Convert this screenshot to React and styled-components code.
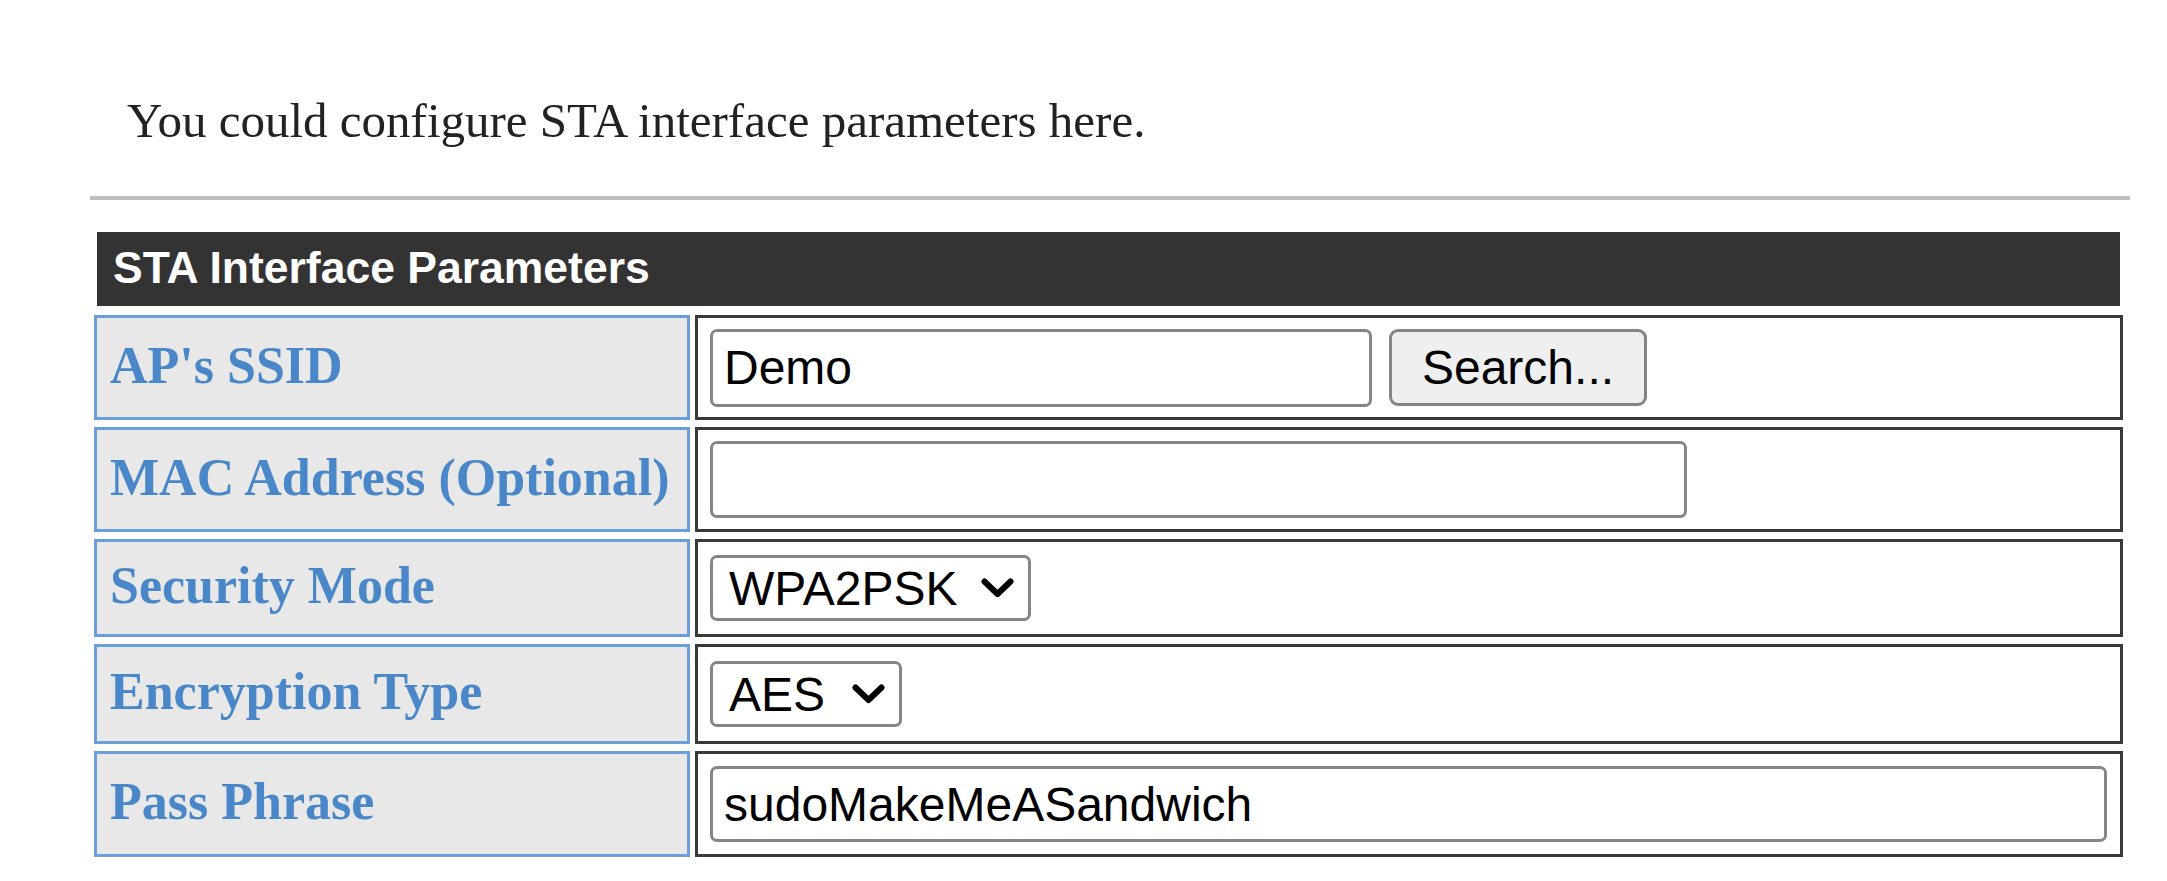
import React from "react";
import styled, { createGlobalStyle } from "styled-components";

const GlobalStyle = createGlobalStyle`
  html, body {
    margin: 0;
    padding: 0;
    background: #fff;
  }
  body {
    font-family: "Liberation Serif", "Times New Roman", serif;
  }
`;

const Page = styled.main`
  box-sizing: border-box;
  width: 2167px;
  padding: 92px 37px 0 90px;
`;

const Intro = styled.p`
  margin: 0 0 0 37px;
  font-family: "Liberation Serif", "Times New Roman", serif;
  font-size: 49px;
  line-height: normal;
  color: #222;
`;

const Rule = styled.hr`
  margin: 47px 0 0;
  height: 4px;
  border: none;
  background: #bdbdbd;
`;

const ParamTable = styled.div`
  display: grid;
  grid-template-columns: 596px 1fr;
  grid-template-rows: 76px 105px 105px 98px 100px 106px;
  column-gap: 5px;
  row-gap: 7px;
  margin: 32px 7px 0 4px;
`;

const TitleBar = styled.div`
  grid-column: 1 / -1;
  box-sizing: border-box;
  margin: 0 3px 2px;
  padding: 11px 0 0 16px;
  background: #333;
  color: #fff;
  font-family: "Liberation Sans", Arial, sans-serif;
  font-weight: bold;
  font-size: 44.5px;
  line-height: normal;
`;

const LabelCell = styled.div`
  display: flex;
  align-items: center;
  box-sizing: border-box;
  padding: 0 13px 5px;
  background: #e8e8e8;
  border: 3px solid #6a9fd9;
  color: #4a87c8;
  font-family: "Liberation Serif", "Times New Roman", serif;
  font-weight: bold;
  font-size: 52px;
  white-space: nowrap;
`;

const ValueCell = styled.div`
  display: flex;
  align-items: center;
  gap: 17px;
  box-sizing: border-box;
  padding: 0 13px 0 12px;
  background: #fff;
  border: 3px solid #3a3a3a;
`;

const controlFont = `
  font-family: "Liberation Sans", Arial, sans-serif;
  font-size: 48px;
  color: #000;
`;

const TextInput = styled.input`
  ${controlFont}
  box-sizing: border-box;
  flex: ${(p) => (p.$fill ? "1 1 auto" : "0 0 auto")};
  width: ${(p) => (p.$fill ? "auto" : `${p.$width}px`)};
  height: ${(p) => p.$height}px;
  padding: 0 11px;
  border: 3px solid #858585;
  border-radius: 7px;
  background: #fff;
  outline: none;
`;

const SearchButton = styled.button`
  ${controlFont}
  box-sizing: border-box;
  width: 258px;
  height: 77px;
  padding: 0;
  border: 3px solid #858585;
  border-radius: 9px;
  background: #efefef;
`;

const SelectBox = styled.div`
  position: relative;
  display: inline-flex;
`;

const Select = styled.select`
  ${controlFont}
  appearance: none;
  box-sizing: border-box;
  width: ${(p) => p.$width}px;
  height: 66px;
  padding: 0 0 0 16px;
  border: 3px solid #858585;
  border-radius: 7px;
  background: #fff;
  outline: none;
`;

const Chevron = styled.svg`
  position: absolute;
  right: 17px;
  top: 50%;
  transform: translateY(-50%);
  pointer-events: none;
`;

function Dropdown({ width, value, options }) {
  return (
    <SelectBox>
      <Select $width={width} defaultValue={value}>
        {options.map((o) => (
          <option key={o} value={o}>
            {o}
          </option>
        ))}
      </Select>
      <Chevron width="33" height="21" viewBox="0 0 33 21">
        <polyline
          points="3.5,4 16.5,16.5 29.5,4"
          fill="none"
          stroke="#000"
          strokeWidth="6"
          strokeLinecap="round"
          strokeLinejoin="round"
        />
      </Chevron>
    </SelectBox>
  );
}

export default function App() {
  return (
    <>
      <GlobalStyle />
      <Page>
        <Intro>You could configure STA interface parameters here.</Intro>
        <Rule />
        <ParamTable>
          <TitleBar>STA Interface Parameters</TitleBar>

          <LabelCell>AP's SSID</LabelCell>
          <ValueCell>
            <TextInput $width={662} $height={78} defaultValue="Demo" />
            <SearchButton type="button">Search...</SearchButton>
          </ValueCell>

          <LabelCell>MAC Address (Optional)</LabelCell>
          <ValueCell>
            <TextInput $width={977} $height={77} defaultValue="" />
          </ValueCell>

          <LabelCell>Security Mode</LabelCell>
          <ValueCell>
            <Dropdown
              width={321}
              value="WPA2PSK"
              options={["OPEN", "SHARED", "WPAPSK", "WPA2PSK"]}
            />
          </ValueCell>

          <LabelCell>Encryption Type</LabelCell>
          <ValueCell>
            <Dropdown width={192} value="AES" options={["TKIP", "AES"]} />
          </ValueCell>

          <LabelCell>Pass Phrase</LabelCell>
          <ValueCell>
            <TextInput $fill $height={76} defaultValue="sudoMakeMeASandwich" />
          </ValueCell>
        </ParamTable>
      </Page>
    </>
  );
}
